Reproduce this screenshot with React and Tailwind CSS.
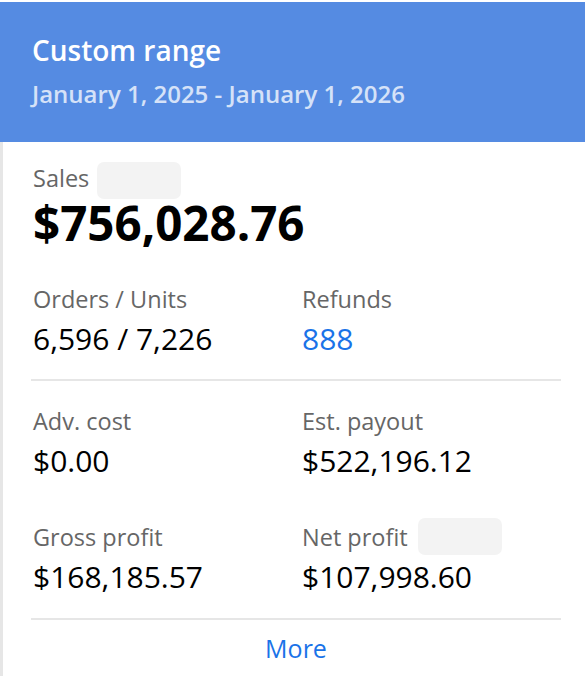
export default function App() {
  const Label = ({ children, pill }) => (
    <div className="flex h-[37px] items-center">
      <span className="text-[23.5px] leading-[30px] text-[#666666]">{children}</span>
      {pill && <span className="ml-[10px] h-[37px] w-[84px] rounded-[7px] bg-[#f3f3f3]" />}
    </div>
  );
  const Value = ({ children, blue }) => (
    <div className={`mt-[2px] text-[30px] leading-[40px] ${blue ? "text-[#1a73e8]" : "text-black"}`}>{children}</div>
  );
  return (
    <div className="h-[676px] w-[585px] bg-white pt-[2px] font-['Open_Sans',sans-serif]">
      <div className="h-[140px] bg-[#558be2] pl-[32px] pt-[30px]">
        <div className="text-[28px] font-semibold leading-[36px] text-white">Custom range</div>
        <div className="mt-[10px] text-[24px] font-semibold leading-[32px] text-[#d5e2f8]">
          January 1, 2025 - January 1, 2026
        </div>
      </div>
      <div className="h-[534px] border-l-[3px] border-[#e6e6e6] pl-[30px] pr-[24px]">
        <div className="flex items-start pt-[20px]">
          <span className="mt-[1px] text-[23.5px] leading-[30px] text-[#666666]">Sales</span>
          <span className="ml-[8px] h-[37px] w-[84px] rounded-[7px] bg-[#f3f3f3]" />
        </div>
        <div className="text-[47.5px] font-bold leading-[48px] text-black">$756,028.76</div>

        <div className="mt-[33px] grid grid-cols-[269px_1fr]">
          <div>
            <Label>Orders / Units</Label>
            <Value>6,596 / 7,226</Value>
          </div>
          <div>
            <Label>Refunds</Label>
            <Value blue>888</Value>
          </div>
        </div>

        <div className="-ml-[2px] mt-[20px] h-[2px] bg-[#e6e6e6]" />

        <div className="mt-[21px] grid grid-cols-[269px_1fr]">
          <div>
            <Label>Adv. cost</Label>
            <Value>$0.00</Value>
          </div>
          <div>
            <Label>Est. payout</Label>
            <Value>$522,196.12</Value>
          </div>
        </div>

        <div className="mt-[37px] grid grid-cols-[269px_1fr]">
          <div>
            <Label>Gross profit</Label>
            <Value>$168,185.57</Value>
          </div>
          <div>
            <Label pill>Net profit</Label>
            <Value>$107,998.60</Value>
          </div>
        </div>

        <div className="-ml-[2px] mt-[21px] h-[2px] bg-[#e6e6e6]" />

        <div className="-ml-[2px] mt-[10px] text-center text-[25px] leading-[36px] text-[#1a73e8]">More</div>
      </div>
    </div>
  );
}
